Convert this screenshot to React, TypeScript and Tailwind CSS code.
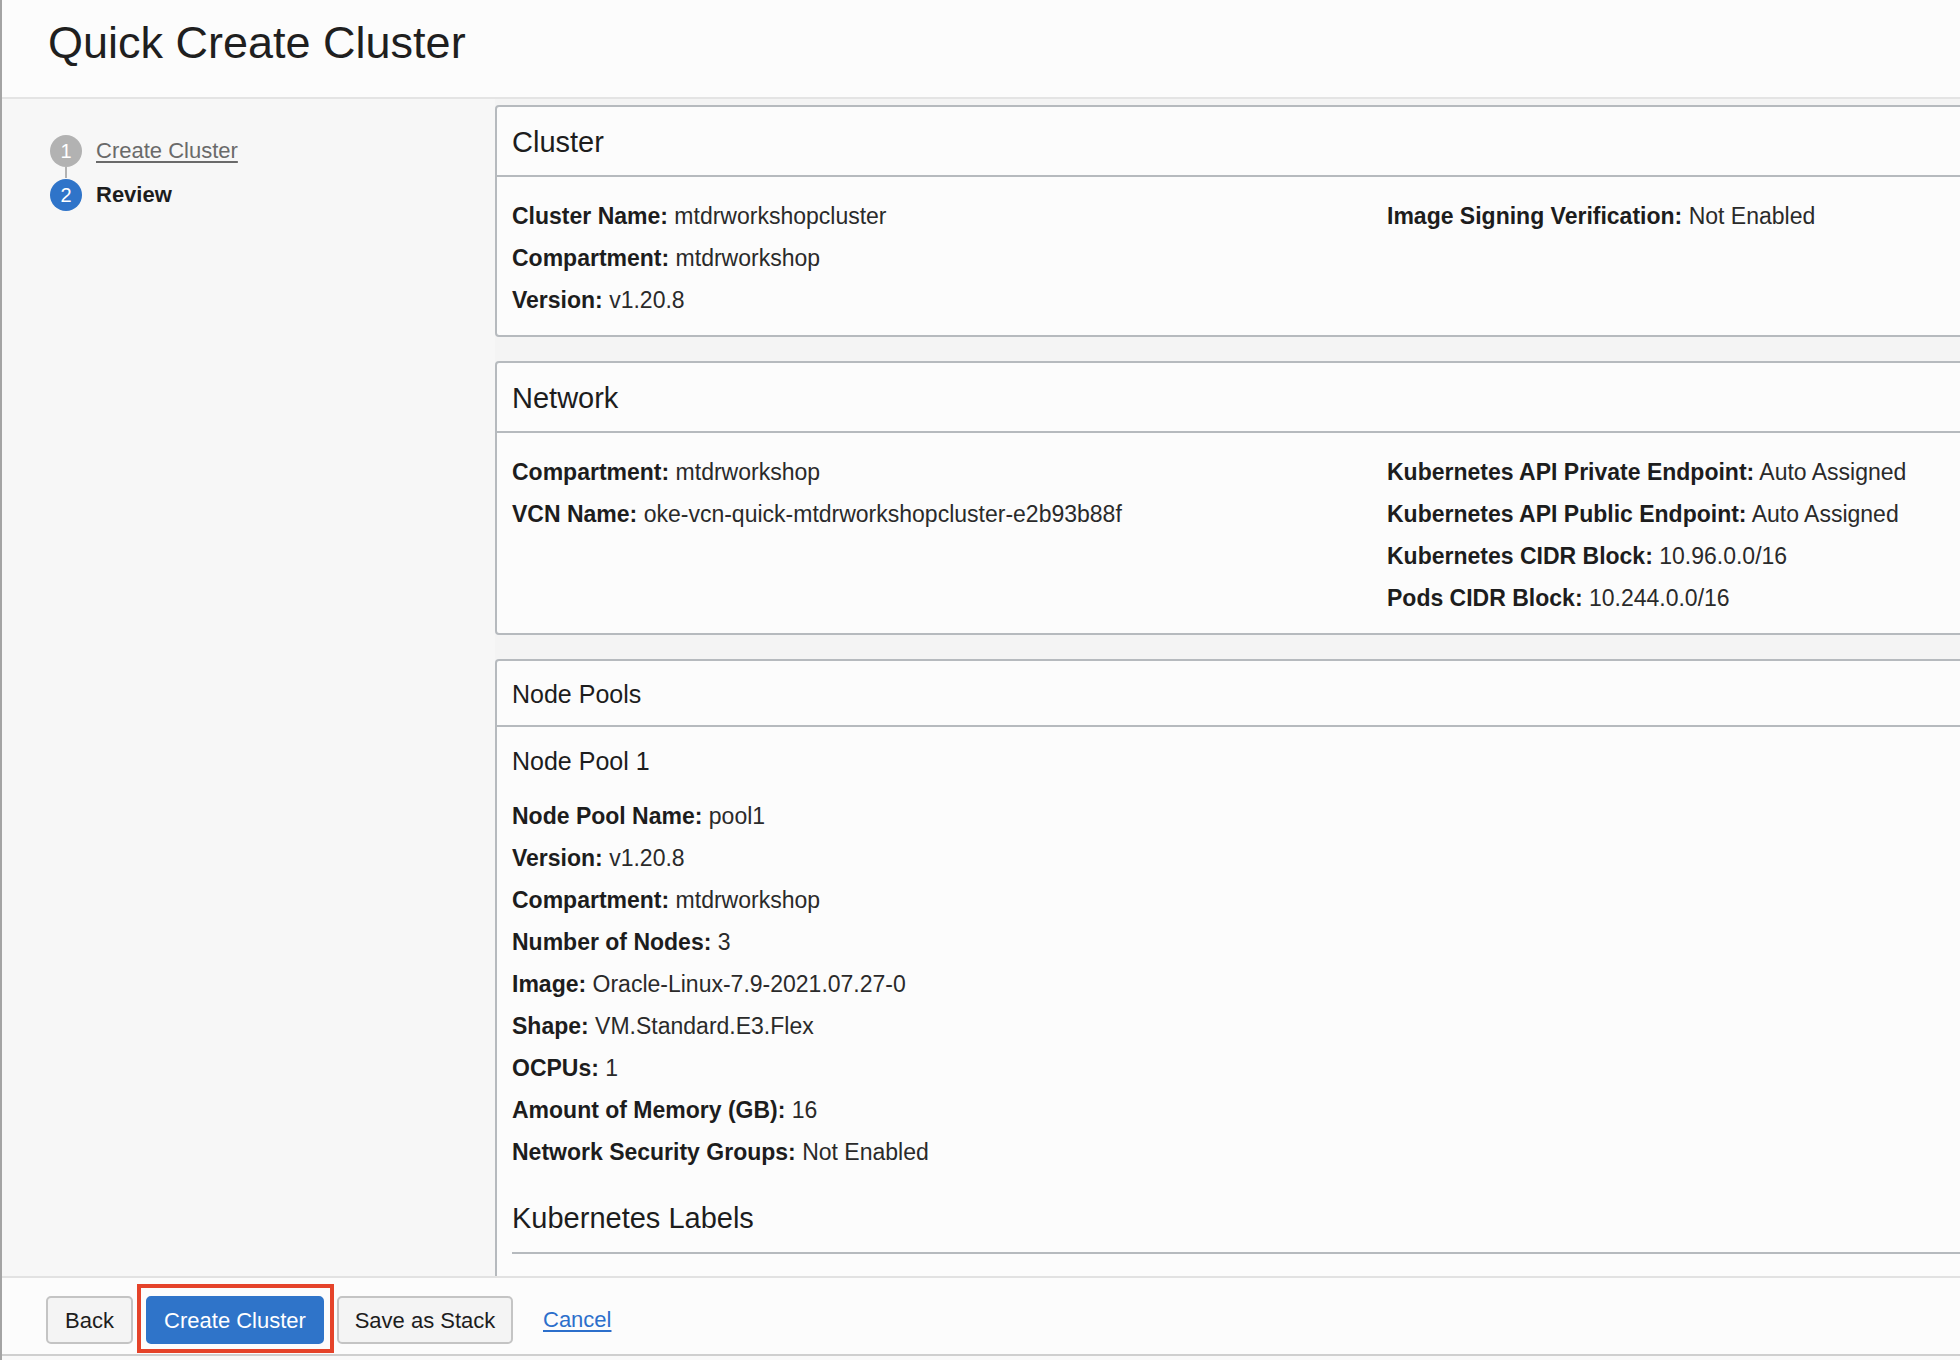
import React from 'react'

type Field = { label: string; value: string }

function Row({ label, value }: Field) {
  return (
    <div className="whitespace-nowrap leading-[42px]">
      <span className="font-bold text-[#1d1d1d]">{label}:</span>{' '}
      <span className="text-[#2a2a2a]">{value}</span>
    </div>
  )
}

function Card({
  title,
  left,
  right = [],
}: {
  title: string
  left: Field[]
  right?: Field[]
}) {
  return (
    <section className="w-[1800px] shrink-0 rounded-l-[4px] border-2 border-[#b6babe] bg-[#fcfcfc]">
      <div className="h-[70px] border-b-2 border-[#b6babe] px-[15px] text-[29px] leading-[70px] text-[#1d1d1d]">
        {title}
      </div>
      <div className="grid grid-cols-[875px_1fr] px-[15px] pt-[18px] pb-[14px] text-[23px]">
        <div>
          {left.map((f) => (
            <Row key={f.label} {...f} />
          ))}
        </div>
        <div>
          {right.map((f) => (
            <Row key={f.label} {...f} />
          ))}
        </div>
      </div>
    </section>
  )
}

const nodePool: Field[] = [
  { label: 'Node Pool Name', value: 'pool1' },
  { label: 'Version', value: 'v1.20.8' },
  { label: 'Compartment', value: 'mtdrworkshop' },
  { label: 'Number of Nodes', value: '3' },
  { label: 'Image', value: 'Oracle-Linux-7.9-2021.07.27-0' },
  { label: 'Shape', value: 'VM.Standard.E3.Flex' },
  { label: 'OCPUs', value: '1' },
  { label: 'Amount of Memory (GB)', value: '16' },
  { label: 'Network Security Groups', value: 'Not Enabled' },
]

export default function App() {
  return (
    <div className="flex h-[1360px] w-[1960px] flex-col overflow-hidden border-l-2 border-[#a4a4a4] bg-[#f7f7f7] font-['Liberation_Sans',Arial,sans-serif] text-[#1d1d1d]">
      {/* Title bar */}
      <header className="h-[99px] shrink-0 border-b-2 border-[#e4e4e4] bg-[#fcfcfc] pt-[20px] pl-[46px]">
        <h1 className="text-[45px] leading-[45px] font-normal text-[#1f1f1f]">Quick Create Cluster</h1>
      </header>

      <div className="flex min-h-0 flex-1">
        {/* Steps */}
        <aside className="w-[493px] shrink-0 bg-[#f7f7f7] pt-[35px] pl-[48px]">
          <div className="flex items-center gap-[14px]">
            <span className="flex h-[32px] w-[32px] items-center justify-center rounded-full bg-[#b2b2b2] text-[20px] text-white">
              1
            </span>
            <span className="text-[22px] text-[#6a6a6a] underline underline-offset-[3px]">Create Cluster</span>
          </div>
          <div className="ml-[15px] h-[11px] w-[2px] bg-[#b2b2b2]" />
          <div className="flex items-center gap-[14px]">
            <span className="flex h-[32px] w-[32px] items-center justify-center rounded-full bg-[#2f74c9] text-[20px] text-white">
              2
            </span>
            <span className="text-[22px] font-bold text-[#1d1d1d]">Review</span>
          </div>
        </aside>

        {/* Review panels */}
        <main className="flex min-w-0 flex-1 flex-col gap-6 overflow-hidden bg-[#f4f4f4] pt-[6px]">
          <Card
            title="Cluster"
            left={[
              { label: 'Cluster Name', value: 'mtdrworkshopcluster' },
              { label: 'Compartment', value: 'mtdrworkshop' },
              { label: 'Version', value: 'v1.20.8' },
            ]}
            right={[{ label: 'Image Signing Verification', value: 'Not Enabled' }]}
          />
          <Card
            title="Network"
            left={[
              { label: 'Compartment', value: 'mtdrworkshop' },
              { label: 'VCN Name', value: 'oke-vcn-quick-mtdrworkshopcluster-e2b93b88f' },
            ]}
            right={[
              { label: 'Kubernetes API Private Endpoint', value: 'Auto Assigned' },
              { label: 'Kubernetes API Public Endpoint', value: 'Auto Assigned' },
              { label: 'Kubernetes CIDR Block', value: '10.96.0.0/16' },
              { label: 'Pods CIDR Block', value: '10.244.0.0/16' },
            ]}
          />
          <section className="w-[1800px] shrink-0 rounded-tl-[4px] border-2 border-b-0 border-[#b6babe] bg-[#fcfcfc] pb-10">
            <div className="h-[66px] border-b-2 border-[#b6babe] px-[15px] text-[25px] leading-[66px]">Node Pools</div>
            <div className="px-[15px] pt-[14px]">
              <h3 className="text-[25px] leading-[40px] font-normal">Node Pool 1</h3>
              <div className="mt-[14px] text-[23px]">
                {nodePool.map((f) => (
                  <Row key={f.label} {...f} />
                ))}
              </div>
              <h3 className="mt-[25px] border-b-2 border-[#b6babe] pb-[14px] text-[29px] leading-[40px] font-normal">
                Kubernetes Labels
              </h3>
            </div>
          </section>
        </main>
      </div>

      {/* Action bar */}
      <footer className="flex h-[80px] shrink-0 items-start gap-[13px] border-y-2 border-t-[#e2e2e2] border-b-[#cfcfcf] bg-[#fcfcfc] pt-[18px] pl-[44px] text-[22px]">
        <button className="h-[48px] w-[87px] rounded-[5px] border-2 border-[#c4c4c4] bg-[#f4f4f4] text-[#1d1d1d]">
          Back
        </button>
        <div className="relative">
          <span className="pointer-events-none absolute -top-[12px] -right-[10px] -bottom-[9px] -left-[9px] border-[4px] border-[#e5432a]" />
          <button className="h-[48px] w-[178px] rounded-[5px] border-2 border-[#2f74c9] bg-[#2f74c9] text-white">
            Create Cluster
          </button>
        </div>
        <button className="h-[48px] w-[176px] rounded-[5px] border-2 border-[#c4c4c4] bg-[#f4f4f4] text-[#1d1d1d]">
          Save as Stack
        </button>
        <a href="#" className="ml-[17px] leading-[48px] text-[#2c6fcb] underline underline-offset-[3px]">
          Cancel
        </a>
      </footer>
      <div className="h-[4px] shrink-0 bg-[#f9f9f9]" />
    </div>
  )
}
